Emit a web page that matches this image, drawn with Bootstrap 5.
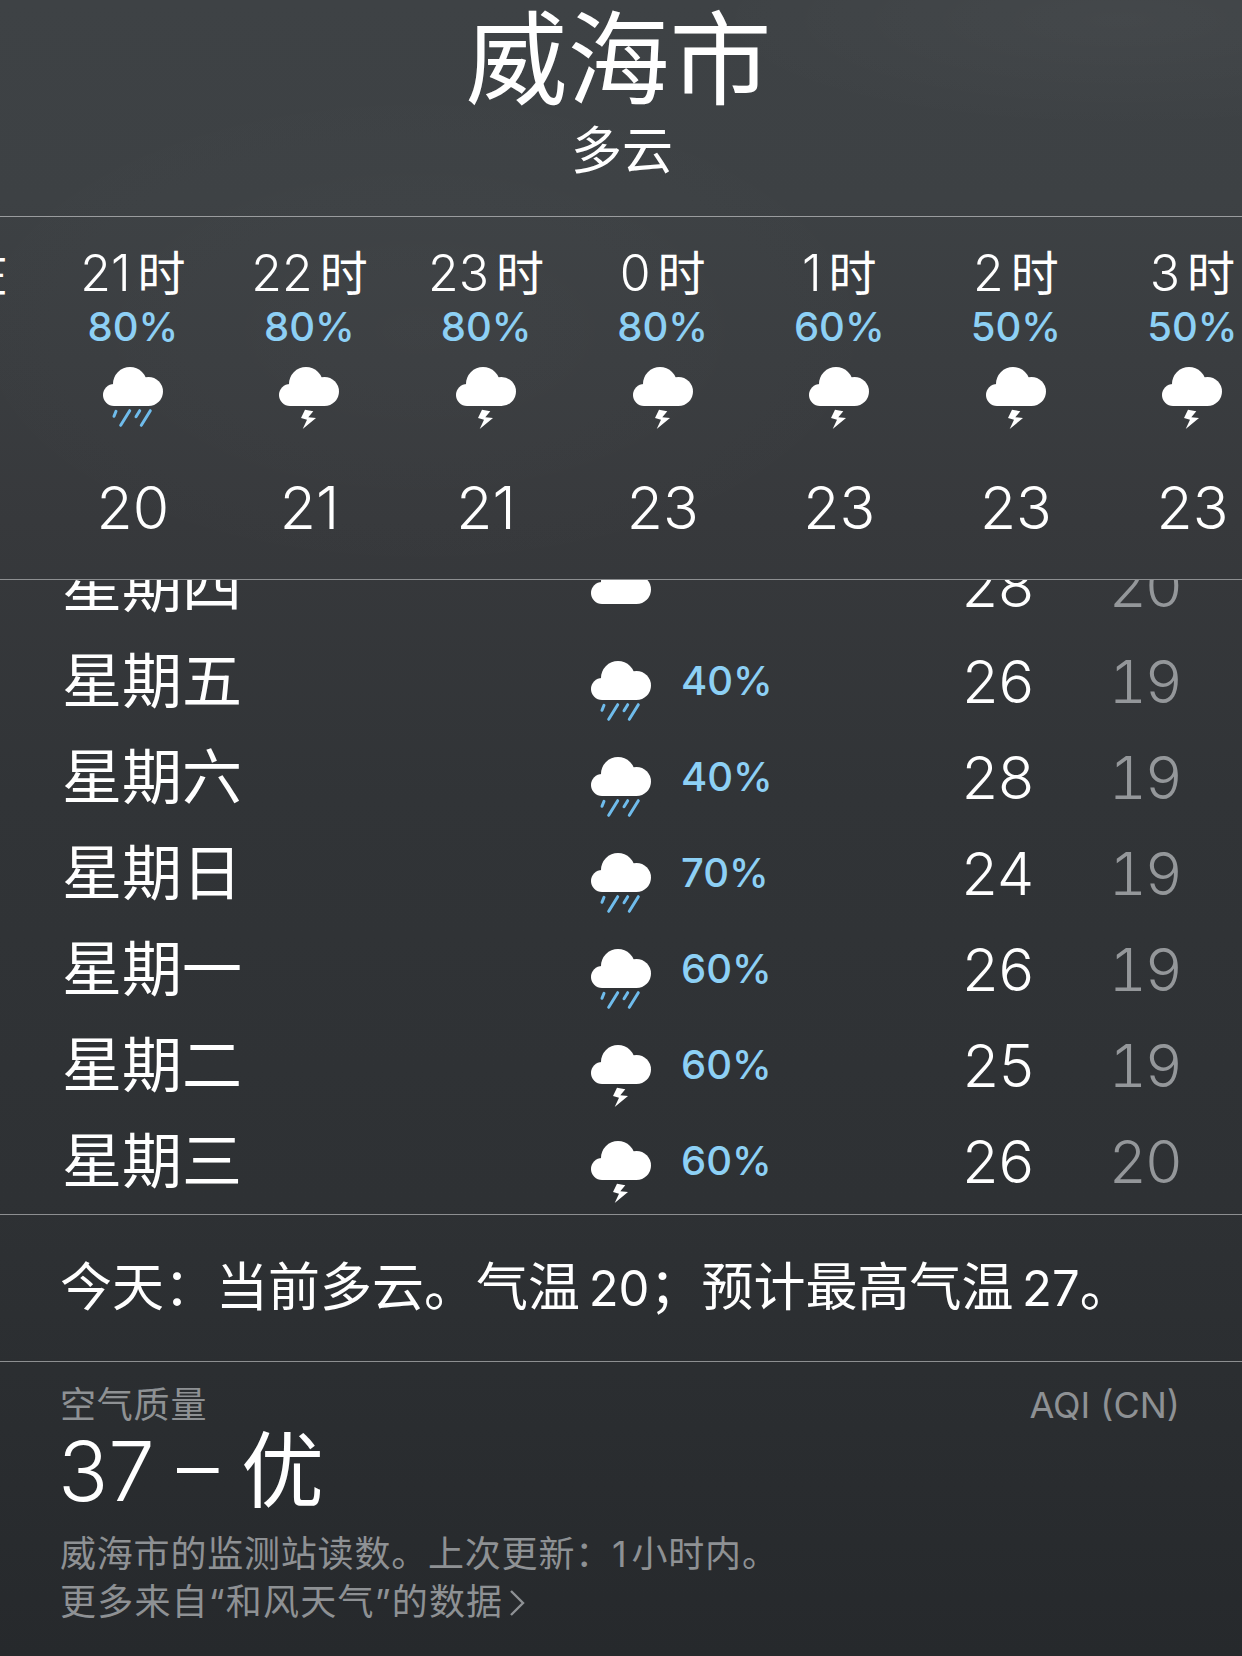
<!DOCTYPE html>
<html lang="zh-CN">

<head>
  <meta charset="UTF-8">
  <title>威海市天气</title>
  <link href="https://cdn.jsdelivr.net/npm/bootstrap@5.3.0/dist/css/bootstrap.min.css" rel="stylesheet">
  <style>
    html, body {
      height: 100%;
    }

    body {
      overflow: hidden;
      color: #fff;
      background:
        radial-gradient(ellipse 420px 110px at 1120px 20px, rgba(255, 255, 255, .03), transparent),
        radial-gradient(ellipse 500px 260px at 420px 330px, rgba(255, 255, 255, .02), transparent),
        linear-gradient(to bottom, #3e4245 0, #3d4144 200px, #37393c 520px, #313437 800px, #2e3134 1200px, #26292c 1656px);
      font-family: Inter, "Noto Sans CJK SC", sans-serif;
      font-weight: 400;
    }

    .weather-app {
      height: 1656px;
    }

    .city-head {
      height: 217px;
      border-bottom: 1px solid #9a9c9e;
    }

    .city-name {
      font-size: 102px;
      line-height: 120px;
      margin: 0 5px 0 0;
      font-weight: 400;
    }

    .city-cond {
      font-size: 51px;
      line-height: 60px;
      margin-top: 1px;
      margin-left: 2px;
    }

    .hour-strip {
      height: 363px;
      margin-left: -132px;
      border-bottom: 1px solid #8d8f91;
    }

    .hour-col {
      flex: 0 0 176.6px;
      width: 176.6px;
      padding-top: 27px;
    }

    .hour-label {
      font-size: 50px;
      line-height: 58px;
      font-weight: 300;
      white-space: nowrap;
    }

    .hour-unit {
      font-size: 48px;
      font-weight: 400;
      margin-left: 7px;
    }

    .hour-pct {
      font-size: 40px;
      line-height: 40px;
      font-weight: 500;
      color: #8dd0f5;
      margin-top: 4px;
    }

    .wx-icon {
      display: block;
      width: 60px;
      height: 64px;
      flex: none;
    }

    .hour-col .wx-icon {
      margin: 20px auto 0;
    }

    .hour-temp {
      font-size: 59px;
      line-height: 70px;
      font-weight: 300;
      margin-top: 42px;
    }

    .day-list {
      height: 635px;
      padding-bottom: 5px;
      border-bottom: 1px solid #8d8f91;
    }

    .day-row {
      flex: 0 0 96px;
      height: 96px;
      padding-left: 62px;
    }

    .day-name {
      flex: 0 0 529px;
      font-size: 60px;
      line-height: 1;
    }

    .day-row .wx-icon {
      margin-top: 23px;
    }

    .day-pct {
      flex: 0 0 232px;
      padding-left: 30px;
      font-size: 40px;
      font-weight: 500;
      color: #8dd0f5;
    }

    .day-hi, .day-lo {
      font-size: 59px;
      font-weight: 300;
      line-height: 1;
      text-align: right;
    }

    .day-hi {
      flex: 0 0 151px;
    }

    .day-lo {
      flex: 0 0 147px;
      color: #94979a;
      font-variant-numeric: tabular-nums;
      letter-spacing: -2px;
    }

    .day-summary {
      height: 147px;
      padding-left: 60px;
      font-size: 52px;
      word-spacing: -6px;
      white-space: pre;
      border-bottom: 1px solid #8d8f91;
    }

    .sum-num {
      font-size: 49px;
    }

    .air-box {
      padding: 20px 62px 0 60px;
    }

    .air-muted {
      color: #8e9194;
      font-size: 36px;
      line-height: 46px;
    }

    .air-label {
      letter-spacing: .8px;
    }

    .air-value {
      font-size: 83px;
      line-height: 86px;
      margin-bottom: 16px;
      margin-left: -2px;
      font-weight: 300;
      word-spacing: -1px;
    }

    .air-grade {
      font-weight: 400;
    }

    .air-note {
      line-height: 48px;
      letter-spacing: .8px;
    }

    .air-more {
      letter-spacing: 1.2px;
    }

    .air-more svg {
      width: 17px;
      height: 28px;
      margin-left: 6px;
      vertical-align: -2px;
    }
  </style>
</head>

<body>
  <!-- shared weather glyphs -->
  <svg width="0" height="0" class="position-absolute">
    <defs>
      <g id="cloud-shape" fill="#fff">
        <circle cx="11" cy="28" r="11"/>
        <circle cx="27" cy="17" r="17"/>
        <circle cx="45.5" cy="24.5" r="14.5"/>
        <rect x="11" y="20" width="35" height="19"/>
      </g>
      <symbol id="wx-rain" viewBox="0 0 60 64">
        <use href="#cloud-shape"/>
        <g stroke="#6fbcec" stroke-width="3" stroke-linecap="round" fill="none">
          <path d="M13 44.3 11 49.3"/>
          <path d="M26.7 43.7 17.7 58.3"/>
          <path d="M36.7 43.7 33 49.7"/>
          <path d="M47.3 43.7 38.3 58.3"/>
        </g>
      </symbol>
      <symbol id="wx-storm" viewBox="0 0 60 64">
        <use href="#cloud-shape"/>
        <path fill="#fff" d="M26 42.7 34.3 44.3 29.3 50.3 37 51 23.7 62 28 52.7 22 51Z"/>
      </symbol>
    </defs>
  </svg>

  <main class="weather-app d-flex flex-column">
    <header class="city-head d-flex flex-column align-items-center">
      <h1 class="city-name">威海市</h1>
      <div class="city-cond">多云</div>
    </header>

    <!-- hourly forecast, scrolled a little past the start -->
    <section class="hour-strip d-flex overflow-hidden text-center">
      <div class="hour-col"><div class="hour-label"><span class="hour-unit">现在</span></div></div>
      <div class="hour-col">
        <div class="hour-label">21<span class="hour-unit">时</span></div>
        <div class="hour-pct">80%</div>
        <svg class="wx-icon"><use href="#wx-rain"/></svg>
        <div class="hour-temp">20</div>
      </div>
      <div class="hour-col">
        <div class="hour-label">22<span class="hour-unit">时</span></div>
        <div class="hour-pct">80%</div>
        <svg class="wx-icon"><use href="#wx-storm"/></svg>
        <div class="hour-temp">21</div>
      </div>
      <div class="hour-col">
        <div class="hour-label">23<span class="hour-unit">时</span></div>
        <div class="hour-pct">80%</div>
        <svg class="wx-icon"><use href="#wx-storm"/></svg>
        <div class="hour-temp">21</div>
      </div>
      <div class="hour-col">
        <div class="hour-label">0<span class="hour-unit">时</span></div>
        <div class="hour-pct">80%</div>
        <svg class="wx-icon"><use href="#wx-storm"/></svg>
        <div class="hour-temp">23</div>
      </div>
      <div class="hour-col">
        <div class="hour-label">1<span class="hour-unit">时</span></div>
        <div class="hour-pct">60%</div>
        <svg class="wx-icon"><use href="#wx-storm"/></svg>
        <div class="hour-temp">23</div>
      </div>
      <div class="hour-col">
        <div class="hour-label">2<span class="hour-unit">时</span></div>
        <div class="hour-pct">50%</div>
        <svg class="wx-icon"><use href="#wx-storm"/></svg>
        <div class="hour-temp">23</div>
      </div>
      <div class="hour-col">
        <div class="hour-label">3<span class="hour-unit">时</span></div>
        <div class="hour-pct">50%</div>
        <svg class="wx-icon"><use href="#wx-storm"/></svg>
        <div class="hour-temp">23</div>
      </div>
    </section>

    <!-- daily forecast, first row slides under the hourly strip -->
    <section class="day-list d-flex flex-column justify-content-end overflow-hidden">
      <div class="day-row d-flex align-items-center">
        <div class="day-name">星期四</div>
        <svg class="wx-icon"><use href="#cloud-shape"/></svg>
        <div class="day-pct"></div>
        <div class="day-hi">28</div>
        <div class="day-lo">20</div>
      </div>
      <div class="day-row d-flex align-items-center">
        <div class="day-name">星期五</div>
        <svg class="wx-icon"><use href="#wx-rain"/></svg>
        <div class="day-pct">40%</div>
        <div class="day-hi">26</div>
        <div class="day-lo">19</div>
      </div>
      <div class="day-row d-flex align-items-center">
        <div class="day-name">星期六</div>
        <svg class="wx-icon"><use href="#wx-rain"/></svg>
        <div class="day-pct">40%</div>
        <div class="day-hi">28</div>
        <div class="day-lo">19</div>
      </div>
      <div class="day-row d-flex align-items-center">
        <div class="day-name">星期日</div>
        <svg class="wx-icon"><use href="#wx-rain"/></svg>
        <div class="day-pct">70%</div>
        <div class="day-hi">24</div>
        <div class="day-lo">19</div>
      </div>
      <div class="day-row d-flex align-items-center">
        <div class="day-name">星期一</div>
        <svg class="wx-icon"><use href="#wx-rain"/></svg>
        <div class="day-pct">60%</div>
        <div class="day-hi">26</div>
        <div class="day-lo">19</div>
      </div>
      <div class="day-row d-flex align-items-center">
        <div class="day-name">星期二</div>
        <svg class="wx-icon"><use href="#wx-storm"/></svg>
        <div class="day-pct">60%</div>
        <div class="day-hi">25</div>
        <div class="day-lo">19</div>
      </div>
      <div class="day-row d-flex align-items-center">
        <div class="day-name">星期三</div>
        <svg class="wx-icon"><use href="#wx-storm"/></svg>
        <div class="day-pct">60%</div>
        <div class="day-hi">26</div>
        <div class="day-lo">20</div>
      </div>
    </section>

    <section class="day-summary d-flex align-items-center"><div>今天：当前多云。气温 <span class="sum-num">20</span>；预计最高气温 <span class="sum-num">27</span>。</div></section>

    <section class="air-box">
      <div class="d-flex justify-content-between air-muted">
        <span class="air-label">空气质量</span>
        <span>AQI (CN)</span>
      </div>
      <div class="air-value">37 – <span class="air-grade">优</span></div>
      <div class="air-muted air-note">威海市的监测站读数。上次更新：1&#8202;小时内。</div>
      <div class="air-muted air-note air-more">更多来自“和风天气”的数据<svg viewBox="0 0 17 28" fill="none" stroke="#8e9194" stroke-width="2.4"><path d="M2 2 14 14 2 26"/></svg></div>
    </section>
  </main>
  <script src="https://cdn.jsdelivr.net/npm/bootstrap@5.3.0/dist/js/bootstrap.bundle.min.js"></script>
</body>

</html>
